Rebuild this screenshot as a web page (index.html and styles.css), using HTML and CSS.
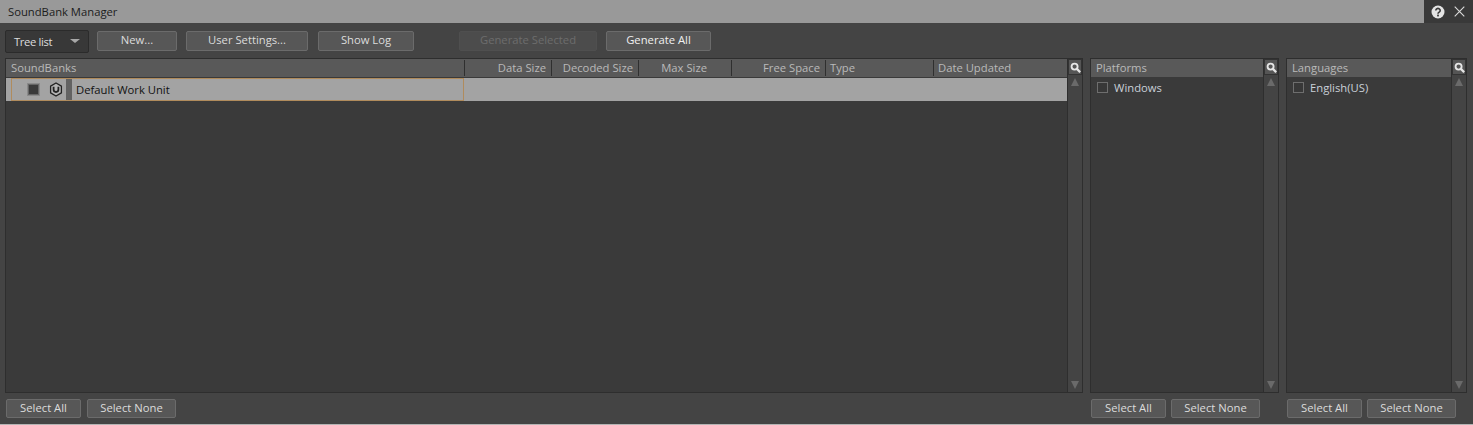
FILE: index.html
```html
<!DOCTYPE html>
<html lang="en">
<head>
<meta charset="utf-8">
<title>SoundBank Manager</title>
<link rel="stylesheet" href="styles.css">
</head>
<body>
<div class="window">
  <header class="titlebar">
    <span class="title">SoundBank Manager</span>
    <div class="winctl">
      <svg class="ico" width="14" height="14" viewBox="0 0 14 14"><circle cx="7" cy="7" r="6.5" fill="#e4e4e4"/><path d="M4.8 5.4a2.2 2 0 1 1 3.4 1.7c-.8.5-1.2.9-1.2 1.6" fill="none" stroke="#3a3a3a" stroke-width="1.6"/><rect x="6.1" y="9.6" width="1.8" height="1.8" fill="#3a3a3a"/></svg>
      <svg class="ico" width="11" height="11" viewBox="0 0 11 11"><path d="M.7.7l9.6 9.6M10.3.7L.7 10.3" stroke="#dcdcdc" stroke-width="1.1" fill="none"/></svg>
    </div>
  </header>
  <div class="toolbar">
    <div class="combo"><span class="combo-label">Tree list</span><i class="caret"></i></div>
    <button class="btn w-new">New...</button>
    <button class="btn w-user">User Settings...</button>
    <button class="btn w-log">Show Log</button>
    <button class="btn w-gensel off">Generate Selected</button>
    <button class="btn w-genall bright">Generate All</button>
  </div>
  <main class="panels">
    <section class="col main-col">
      <div class="panel">
        <div class="list">
          <div class="head cols">
            <span class="c c-name">SoundBanks</span>
            <span class="c c-data r">Data Size</span>
            <span class="c c-dec r">Decoded Size</span>
            <span class="c c-max r">Max Size</span>
            <span class="c c-free r">Free Space</span>
            <span class="c c-type">Type</span>
            <span class="c c-date">Date Updated</span>
          </div>
          <div class="row">
            <div class="row-name">
              <span class="check-filled"></span>
              <svg class="wu" width="14" height="15" viewBox="0 0 14 15"><path d="M7 1l5.4 3.1v6.8L7 14l-5.4-3.1V4.100z" fill="#b4b4b4" stroke="#222" stroke-width="1.3" stroke-linejoin="round"/><path d="M4.6 4.800v2.800a2.400 2.400 0 0 0 4.800 0V4.800" fill="none" stroke="#222" stroke-width="1.800"/></svg>
              <span class="grip"></span>
              <span class="row-label">Default Work Unit</span>
            </div>
          </div>
        </div>
        <div class="side">
          <span class="search"><svg width="11" height="11" viewBox="0 0 12 12"><circle cx="5" cy="5" r="3.3" fill="#555" stroke="#e6e6e6" stroke-width="2"/><path d="M7.5 7.5l3.6 3.6" stroke="#e6e6e6" stroke-width="2.4"/></svg></span>
          <i class="up"></i><i class="down"></i>
        </div>
      </div>
      <div class="actions"><button class="btn w-all">Select All</button><button class="btn w-none">Select None</button></div>
    </section>
    <section class="col plat-col">
      <div class="panel">
        <div class="list">
          <div class="head"><span class="c">Platforms</span></div>
          <label class="item"><span class="box"></span>Windows</label>
        </div>
        <div class="side">
          <span class="search"><svg width="11" height="11" viewBox="0 0 12 12"><circle cx="5" cy="5" r="3.3" fill="#555" stroke="#e6e6e6" stroke-width="2"/><path d="M7.5 7.5l3.6 3.6" stroke="#e6e6e6" stroke-width="2.4"/></svg></span>
          <i class="up"></i><i class="down"></i>
        </div>
      </div>
      <div class="actions"><button class="btn w-all">Select All</button><button class="btn w-none">Select None</button></div>
    </section>
    <section class="col lang-col">
      <div class="panel">
        <div class="list">
          <div class="head"><span class="c">Languages</span></div>
          <label class="item"><span class="box"></span>English(US)</label>
        </div>
        <div class="side">
          <span class="search"><svg width="11" height="11" viewBox="0 0 12 12"><circle cx="5" cy="5" r="3.3" fill="#555" stroke="#e6e6e6" stroke-width="2"/><path d="M7.5 7.5l3.6 3.6" stroke="#e6e6e6" stroke-width="2.4"/></svg></span>
          <i class="up"></i><i class="down"></i>
        </div>
      </div>
      <div class="actions"><button class="btn w-all">Select All</button><button class="btn w-none">Select None</button></div>
    </section>
  </main>
</div>
</body>
</html>
```
FILE: styles.css
```css
* { box-sizing: border-box; }
html, body { margin: 0; height: 100%; }
body { overflow: hidden; background: #444; font-family: "Open Sans", "Noto Sans", sans-serif; font-size: 11.25px; color: #d0d0d0; }
.window { width: 1473px; height: 425px; display: flex; flex-direction: column; background: #444; border-bottom: 1px solid #b4b4b4; }
.titlebar { height: 23px; flex: none; display: flex; align-items: center; justify-content: space-between; background: #999; padding-left: 8px; }
.title { color: #1c1c1c; }
.winctl { width: 49px; height: 23px; background: #393939; display: flex; align-items: center; gap: 9px; padding-left: 7px; }
.ico { display: block; flex: none; }
.toolbar { height: 35px; flex: none; display: flex; align-items: flex-start; padding: 7px 0 0 5px; }
.combo { width: 84px; height: 23px; background: #383838; border: 1px solid #2b2b2b; border-radius: 2px; display: flex; align-items: center; justify-content: space-between; padding: 0 8px; margin-right: 8px; color: #ddd; }
.combo-label { letter-spacing: -.35px; }
.caret { width: 0; height: 0; border: 5px solid transparent; border-top: 4px solid #a8a8a8; border-bottom: 0; margin-top: -2px; }
.btn { height: 20px; padding: 0 0 3px; background: #575757; border: 1px solid #6b6b6b; border-radius: 2px; color: #dcdcdc; font: inherit; display: block; flex: none; white-space: nowrap; }
.toolbar .btn { margin-top: 1px; }
.w-new { width: 80px; margin-right: 9px; }
.w-user { width: 122px; margin-right: 10px; }
.w-log { width: 96px; margin-right: 45px; }
.w-gensel { width: 138px; margin-right: 9px; }
.w-genall { width: 105px; }
.off { background: #4c4c4c; border-color: #4f4f4f; color: #6d6d6d; }
.bright { color: #f0f0f0; }
.panels { flex: 1; min-height: 0; display: grid; grid-template-columns: 1078px 189px 181px; column-gap: 7px; padding-left: 5px; }
.col { display: flex; flex-direction: column; min-width: 0; }
.panel { height: 335px; flex: none; display: flex; background: #3a3a3a; border: 1px solid #2e2e2e; }
.list { flex: 1; min-width: 0; }
.head { height: 18px; background: #595959; display: flex; align-items: center; color: #b9b9b9; padding-bottom: 1px; }
.c { display: block; padding: 0 5px; white-space: nowrap; }
.cols .c { height: 16px; line-height: 16px; border-right: 1px solid #2f2f2f; flex: none; }
.cols .c:last-child { border-right: 0; }
.r { text-align: right; }
.c-name { width: 459px; }
.c-data { width: 87px; }
.c-dec { width: 87px; }
.c-max { width: 93px; padding-right: 24px !important; }
.c-free { width: 94px; }
.c-type { width: 108px; padding: 0 4px !important; }
.c-date { padding: 0 4px !important; }
.row { height: 23px; margin-top: 1px; background: #a3a3a3; display: flex; color: #111; }
.row-name { width: 453px; height: 23px; margin-left: 5px; border: 1px solid #b08b5c; display: flex; align-items: center; padding-left: 15px; }
.check-filled { width: 13px; height: 13px; border: 2px solid #666; background: #3a3a3a; outline: 1px solid #8a8a8a; outline-offset: -1px; flex: none; display: block; }
.wu { margin-left: 9px; flex: none; }
.grip { width: 6px; height: 21px; background: #626262; margin-left: 3px; flex: none; }
.row-label { margin-left: 4px; white-space: nowrap; }
.side { width: 15px; flex: none; display: flex; flex-direction: column; align-items: center; background: #444; border-left: 1px solid #2e2e2e; }
.search { width: 14px; height: 16px; background: #555; display: flex; align-items: center; justify-content: center; flex: none; border: 1px solid #333; }
.up, .down { width: 0; height: 0; border: 4.5px solid transparent; display: block; }
.up { border-bottom: 8px solid #6a6a6a; border-top: 0; margin-top: 3px; }
.down { border-top: 8px solid #6a6a6a; border-bottom: 0; margin-top: auto; margin-bottom: 3px; }
.item { height: 19px; margin-top: 1px; display: flex; align-items: center; padding-left: 6px; color: #c9d0d8; white-space: nowrap; }
.box { width: 11px; height: 11px; border: 1px solid #6e6e6e; background: #383838; margin-right: 6px; flex: none; }
.actions { display: flex; padding: 6px 0 0 1px; gap: 5px; }
.main-col .actions { gap: 6px; }
.actions .btn { height: 19px; padding-bottom: 2px; }
.w-all { width: 75px; }
.w-none { width: 89px; }
```
